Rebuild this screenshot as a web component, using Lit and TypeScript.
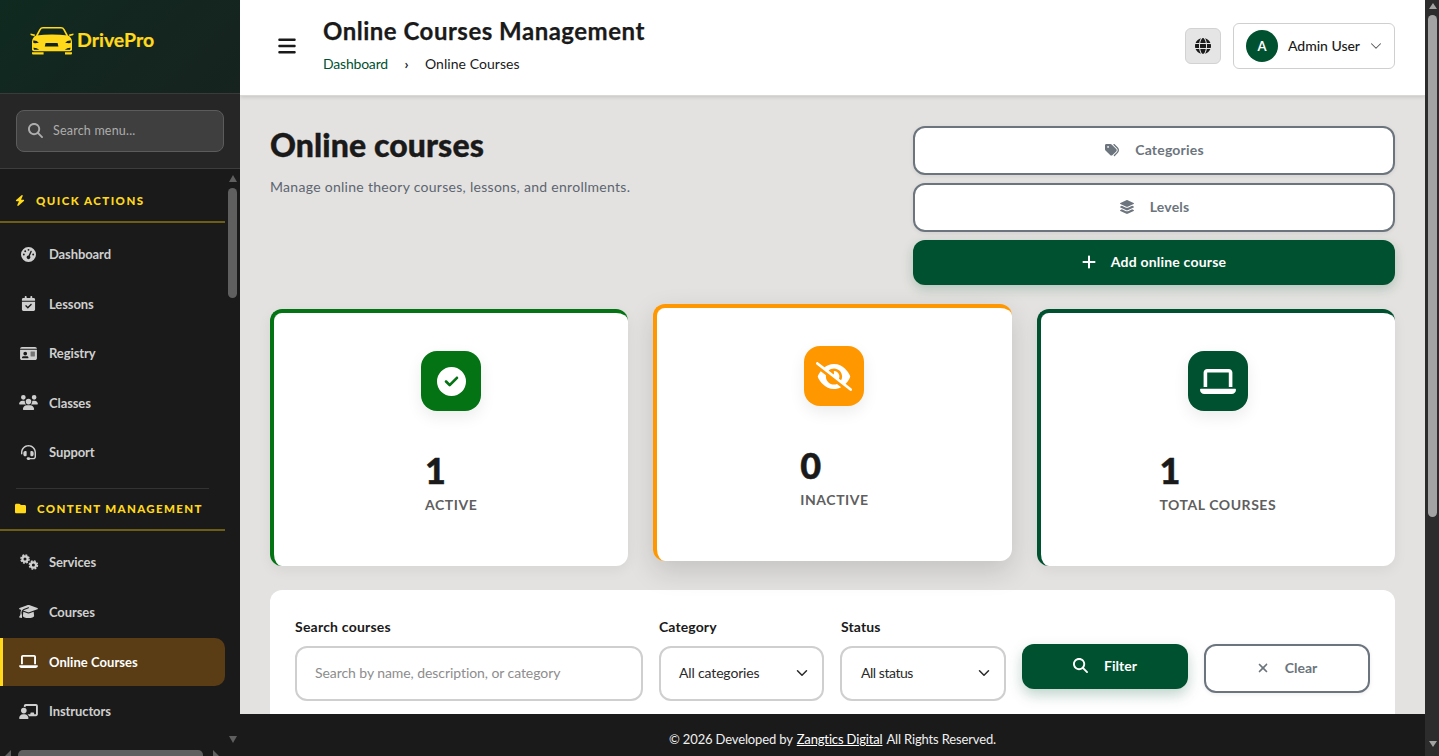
import { LitElement, html, css } from "lit";
import { customElement } from "lit/decorators.js";

const P: Record<string, [string, string]> = {
  search: ["0 0 512 512", "M416 208c0 45.9-14.9 88.3-40 122.7L502.6 457.4c12.5 12.5 12.5 32.8 0 45.3s-32.8 12.5-45.3 0L330.7 376c-34.4 25.2-76.8 40-122.7 40C93.1 416 0 322.9 0 208S93.1 0 208 0S416 93.1 416 208zM208 352a144 144 0 1 0 0-288 144 144 0 1 0 0 288z"],
  bars: ["0 0 448 512", "M0 96C0 78.3 14.3 64 32 64H416c17.7 0 32 14.3 32 32s-14.3 32-32 32H32C14.3 128 0 113.7 0 96zM0 256c0-17.7 14.3-32 32-32H416c17.7 0 32 14.3 32 32s-14.3 32-32 32H32c-17.7 0-32-14.3-32-32zM448 416c0 17.7-14.3 32-32 32H32c-17.7 0-32-14.3-32-32s14.3-32 32-32H416c17.7 0 32 14.3 32 32z"],
  bolt: ["0 0 448 512", "M349.4 44.6c5.9-13.7 1.5-29.7-10.6-38.5s-28.6-8-39.9 1.8l-256 224c-10 8.8-13.6 22.9-8.9 35.3S50.7 288 64 288H175.5L98.6 467.4c-5.9 13.7-1.5 29.7 10.6 38.5s28.6 8 39.9-1.8l256-224c10-8.8 13.6-22.9 8.9-35.3s-16.6-20.7-30-20.7H272.5L349.4 44.6z"],
  folder: ["0 0 512 512", "M64 480H448c35.3 0 64-28.7 64-64V160c0-35.3-28.7-64-64-64H288c-10.1 0-19.6-4.7-25.6-12.8L243.2 57.6C231.1 41.5 212.1 32 192 32H64C28.7 32 0 60.7 0 96V416c0 35.3 28.7 64 64 64z"],
  check: ["0 0 512 512", "M256 512A256 256 0 1 0 256 0a256 256 0 1 0 0 512zM369 209L241 337c-9.4 9.4-24.6 9.4-33.9 0l-64-64c-9.4-9.4-9.4-24.6 0-33.9s24.6-9.4 33.9 0l47 47L335 175c9.4-9.4 24.6-9.4 33.9 0s9.4 24.6 0 33.9z"],
  laptop: ["0 0 640 512", "M128 32C92.7 32 64 60.7 64 96V352h64V96H512V352h64V96c0-35.3-28.7-64-64-64H128zM19.2 384C8.6 384 0 392.6 0 403.2C0 445.6 34.4 480 76.8 480H563.2c42.4 0 76.8-34.4 76.8-76.8c0-10.6-8.6-19.2-19.2-19.2H19.2z"],
  eyeslash: ["0 0 640 512", "M38.8 5.1C28.4-3.1 13.3-1.2 5.1 9.2S-1.2 34.7 9.2 42.9l592 464c10.4 8.2 25.5 6.3 33.7-4.1s6.3-25.5-4.1-33.7L525.6 386.7c39.6-40.6 66.4-86.1 79.9-118.4c3.3-7.9 3.3-16.7 0-24.6c-14.9-35.7-46.2-87.7-93-131.1C465.5 68.8 400.8 32 320 32c-68.2 0-125 26.3-169.3 60.8L38.8 5.1zM223.1 149.5C248.6 126.2 282.7 112 320 112c79.5 0 144 64.5 144 144c0 24.9-6.3 48.3-17.4 68.7L408 294.5c8.4-19.3 10.6-41.4 4.8-63.3c-11.1-41.5-47.8-69.4-88.6-71.1c-5.8-.2-9.2 6.1-7.4 11.7c2.1 6.4 3.3 13.2 3.3 20.3c0 10.2-2.4 19.8-6.6 28.3l-90.3-70.8zM373 389.9c-16.4 6.5-34.3 10.1-53 10.1c-79.5 0-144-64.5-144-144c0-6.9 .5-13.6 1.4-20.2L83.1 161.5C60.3 191.2 44 220.8 34.5 243.7c-3.3 7.9-3.3 16.7 0 24.6c14.9 35.7 46.2 87.7 93 131.1C174.5 443.2 239.2 480 320 480c47.8 0 89.9-12.9 126.2-32.5L373 389.9z"],
  tags: ["0 0 512 512", "M345 39.1L472.8 168.4c52.4 53 52.4 138.2 0 191.2L360.8 472.9c-9.3 9.4-24.5 9.5-33.9 .2s-9.5-24.5-.2-33.9L438.6 325.9c33.9-34.3 33.9-89.4 0-123.7L310.9 72.9c-9.3-9.4-9.2-24.6 .2-33.9s24.6-9.2 33.9 .2zM0 229.5V80C0 53.5 21.5 32 48 32H197.5c17 0 33.3 6.7 45.3 18.7l168 168c25 25 25 65.5 0 90.5L277.3 442.7c-25 25-65.5 25-90.5 0l-168-168C6.7 262.7 0 246.5 0 229.5zM144 144a32 32 0 1 0 -64 0 32 32 0 1 0 64 0z"],
  layers: ["0 0 576 512", "M264.5 5.2c14.9-6.9 32.1-6.9 47 0l218.6 101c8.5 3.9 13.9 12.4 13.9 21.8s-5.4 17.9-13.9 21.8l-218.6 101c-14.9 6.9-32.1 6.9-47 0L45.9 149.8C37.4 145.8 32 137.3 32 128s5.4-17.9 13.9-21.8L264.5 5.2zM476.9 209.6l53.2 24.6c8.5 3.9 13.9 12.4 13.9 21.8s-5.4 17.9-13.9 21.8l-218.6 101c-14.9 6.9-32.1 6.9-47 0L45.9 277.8C37.4 273.8 32 265.3 32 256s5.4-17.9 13.9-21.8l53.2-24.6 152 70.2c23.4 10.8 50.4 10.8 73.8 0l152-70.2zm-152 198.2l152-70.2 53.2 24.6c8.5 3.9 13.9 12.4 13.9 21.8s-5.4 17.9-13.9 21.8l-218.6 101c-14.9 6.9-32.1 6.9-47 0L45.9 405.8C37.4 401.8 32 393.3 32 384s5.4-17.9 13.9-21.8l53.2-24.6 152 70.2c23.4 10.8 50.4 10.8 73.8 0z"],
  plus: ["0 0 448 512", "M256 80c0-17.7-14.3-32-32-32s-32 14.3-32 32V224H48c-17.7 0-32 14.3-32 32s14.3 32 32 32H192V432c0 17.7 14.3 32 32 32s32-14.3 32-32V288H400c17.7 0 32-14.3 32-32s-14.3-32-32-32H256V80z"],
  xmark: ["0 0 384 512", "M342.6 150.6c12.5-12.5 12.5-32.8 0-45.3s-32.8-12.5-45.3 0L192 210.7 86.6 105.4c-12.5-12.5-32.8-12.5-45.3 0s-12.5 32.8 0 45.3L146.7 256 41.4 361.4c-12.5 12.5-12.5 32.8 0 45.3s32.8 12.5 45.3 0L192 301.3 297.4 406.6c12.5 12.5 32.8 12.5 45.3 0s12.5-32.8 0-45.3L237.3 256 342.6 150.6z"],
  globe: ["0 0 512 512", "M352 256c0 22.2-1.2 43.6-3.3 64H163.3c-2.2-20.4-3.3-41.8-3.3-64s1.2-43.6 3.3-64H348.7c2.2 20.4 3.3 41.8 3.3 64zm28.8-64H503.9c5.3 20.5 8.1 41.9 8.1 64s-2.8 43.5-8.1 64H380.8c2.1-20.6 3.2-42 3.2-64s-1.1-43.4-3.2-64zm112.6-32H376.7c-10-63.9-29.8-117.4-55.3-151.6c78.3 20.7 142 77.5 171.9 151.6zm-149.1 0H167.7c6.1-36.4 15.5-68.6 27-94.7c10.5-23.6 22.2-40.7 33.5-51.5C239.4 3.2 248.7 0 256 0s16.6 3.2 27.8 13.8c11.3 10.8 23 27.9 33.5 51.5c11.6 26 20.9 58.2 27 94.7zm-209 0H18.6C48.6 85.9 112.2 29.1 190.6 8.4C165.1 42.6 145.3 96.1 135.3 160zM8.1 192H131.2c-2.1 20.6-3.2 42-3.2 64s1.1 43.4 3.2 64H8.1C2.8 299.5 0 278.1 0 256s2.8-43.5 8.1-64zM194.7 446.6c-11.6-26-20.9-58.2-27-94.6H344.3c-6.1 36.4-15.5 68.6-27 94.6c-10.5 23.6-22.2 40.7-33.5 51.5C272.6 508.8 263.3 512 256 512s-16.6-3.2-27.8-13.8c-11.3-10.8-23-27.9-33.5-51.5zM135.3 352c10 63.9 29.8 117.4 55.3 151.6C112.2 482.9 48.6 426.1 18.6 352H135.3zm358.1 0c-30 74.1-93.6 130.9-171.9 151.6c25.5-34.2 45.2-87.7 55.3-151.6H493.4z"],
  gauge: ["0 0 512 512", "M0 256a256 256 0 1 1 512 0A256 256 0 1 1 0 256zM288 96a32 32 0 1 0 -64 0 32 32 0 1 0 64 0zM256 416c35.3 0 64-28.7 64-64c0-17.4-6.9-33.1-18.1-44.6L366 161.7c5.3-12.1-.2-26.3-12.3-31.6s-26.3 .2-31.6 12.3L257.9 288c-.6 0-1.3 0-1.9 0c-35.3 0-64 28.7-64 64s28.7 64 64 64zM176 144a32 32 0 1 0 -64 0 32 32 0 1 0 64 0zM96 288a32 32 0 1 0 0-64 32 32 0 1 0 0 64zm352-32a32 32 0 1 0 -64 0 32 32 0 1 0 64 0z"],
  calendar: ["0 0 448 512", "M128 0c17.7 0 32 14.3 32 32V64H288V32c0-17.7 14.3-32 32-32s32 14.3 32 32V64h48c26.5 0 48 21.5 48 48v48H0V112C0 85.5 21.5 64 48 64H96V32c0-17.7 14.3-32 32-32zM0 192H448V464c0 26.5-21.5 48-48 48H48c-26.5 0-48-21.5-48-48V192zM329 305c9.4-9.4 9.4-24.6 0-33.9s-24.6-9.4-33.9 0l-95 95-47-47c-9.4-9.4-24.6-9.4-33.9 0s-9.4 24.6 0 33.9l64 64c9.4 9.4 24.6 9.4 33.9 0L329 305z"],
  idcard: ["0 0 576 512", "M0 96l576 0c0-35.3-28.7-64-64-64H64C28.7 32 0 60.7 0 96zm0 32V416c0 35.3 28.7 64 64 64H512c35.3 0 64-28.7 64-64V128H0zM64 405.3c0-29.5 23.9-53.3 53.3-53.3H234.7c29.5 0 53.3 23.9 53.3 53.3c0 5.9-4.8 10.7-10.7 10.7H74.7c-5.9 0-10.7-4.8-10.7-10.7zM176 192a64 64 0 1 1 0 128 64 64 0 1 1 0-128zm176 16c0-8.8 7.2-16 16-16H496c8.8 0 16 7.2 16 16s-7.2 16-16 16H368c-8.8 0-16-7.2-16-16zm0 64c0-8.8 7.2-16 16-16H496c8.8 0 16 7.2 16 16s-7.2 16-16 16H368c-8.8 0-16-7.2-16-16zm0 64c0-8.8 7.2-16 16-16H496c8.8 0 16 7.2 16 16s-7.2 16-16 16H368c-8.8 0-16-7.2-16-16z"],
  users: ["0 0 640 512", "M144 0a80 80 0 1 1 0 160A80 80 0 1 1 144 0zM512 0a80 80 0 1 1 0 160A80 80 0 1 1 512 0zM0 298.7C0 239.8 47.8 192 106.7 192h42.7c15.9 0 31 3.5 44.6 9.7c-1.3 7.2-1.9 14.7-1.9 22.3c0 38.2 16.8 72.5 43.3 96c-.2 0-.4 0-.7 0H21.3C9.6 320 0 310.4 0 298.7zM405.3 320c-.2 0-.4 0-.7 0c26.6-23.5 43.3-57.8 43.3-96c0-7.6-.7-15-1.9-22.3c13.6-6.3 28.7-9.7 44.6-9.7h42.7C592.2 192 640 239.8 640 298.7c0 11.8-9.6 21.3-21.3 21.3H405.3zM224 224a96 96 0 1 1 192 0 96 96 0 1 1 -192 0zM128 485.3C128 411.7 187.7 352 261.3 352H378.7C452.3 352 512 411.7 512 485.3c0 14.7-11.9 26.7-26.7 26.7H154.7c-14.7 0-26.7-11.9-26.7-26.7z"],
  headset: ["0 0 512 512", "M256 48C141.1 48 48 141.1 48 256v40c0 13.3-10.7 24-24 24s-24-10.7-24-24V256C0 114.6 114.6 0 256 0S512 114.6 512 256V400.1c0 48.6-39.4 88-88.1 88L313.6 488c-8.3 14.3-23.8 24-41.6 24H240c-26.5 0-48-21.5-48-48s21.5-48 48-48h32c17.8 0 33.3 9.7 41.6 24l110.4 .1c22.1 0 40-17.9 40-40V256c0-114.9-93.1-208-208-208zM144 208h16c17.7 0 32 14.3 32 32V352c0 17.7-14.3 32-32 32H144c-35.3 0-64-28.7-64-64V272c0-35.3 28.7-64 64-64zm224 0c35.3 0 64 28.7 64 64v48c0 35.3-28.7 64-64 64H352c-17.7 0-32-14.3-32-32V240c0-17.7 14.3-32 32-32h16z"],
  cap: ["0 0 640 512", "M320 32c-8.1 0-16.1 1.4-23.7 4.1L15.8 137.4C6.3 140.9 0 149.9 0 160s6.3 19.1 15.8 22.6l57.9 20.9C57.3 229.3 48 259.8 48 291.9v28.1c0 28.4-10.8 57.7-22.3 80.8c-6.5 13-13.9 25.8-22.5 37.6C0 442.7-.9 448.3 .9 453.4s6 8.9 11.2 10.2l64 16c4.2 1.1 8.7 .3 12.4-2s6.3-6.1 7.1-10.4c8.6-42.8 4.3-81.2-2.1-108.7C90.3 344.3 86 329.8 80 316.5V291.9c0-30.2 10.2-58.7 27.9-81.5c12.9-15.5 29.6-28 49.2-35.7l157-61.7c8.2-3.2 17.5 .8 20.7 9s-.8 17.5-9 20.7l-157 61.7c-12.4 4.9-23.3 12.4-32.2 21.6l159.6 57.6c7.6 2.7 15.6 4.1 23.7 4.1s16.1-1.4 23.7-4.1L624.2 182.6c9.5-3.4 15.8-12.5 15.8-22.6s-6.3-19.1-15.8-22.6L343.7 36.1C336.1 33.4 328.1 32 320 32zM128 408c0 35.3 86 72 192 72s192-36.7 192-72L496.7 262.6 354.5 314c-11.1 4-22.8 6-34.5 6s-23.5-2-34.5-6L143.3 262.6 128 408z"],
  board: ["0 0 640 512", "M160 64c0-35.3 28.7-64 64-64H576c35.3 0 64 28.7 64 64V352c0 35.3-28.7 64-64 64H336.8c-11.8-25.5-29.9-47.5-52.4-64H384V320c0-17.7 14.3-32 32-32h64c17.7 0 32 14.3 32 32v32h64V64L224 64v49.1C205.2 102.2 183.3 96 160 96V64zm0 64a96 96 0 1 1 0 192 96 96 0 1 1 0-192zM133.3 352h53.3C260.3 352 320 411.7 320 485.3c0 14.7-11.9 26.7-26.7 26.7H26.7C11.9 512 0 500.1 0 485.3C0 411.7 59.7 352 133.3 352z"],
};

function ic(name: string, w: number, h: number) {
  const [vb, d] = P[name];
  return html`<svg class="ic" viewBox=${vb} width=${w} height=${h} fill="currentColor" aria-hidden="true"><path d=${d}></path></svg>`;
}

const gears = html`<svg class="ic" viewBox="0 0 20 16" width="20" height="16" fill="none" stroke="currentColor" aria-hidden="true">
  <circle cx="6" cy="5" r="2.6" stroke-width="2.2"></circle>
  <circle cx="6" cy="5" r="4.1" stroke-width="1.4" stroke-dasharray="1.9 1.32"></circle>
  <circle cx="14.4" cy="11" r="2.6" stroke-width="2.2"></circle>
  <circle cx="14.4" cy="11" r="4.1" stroke-width="1.4" stroke-dasharray="1.9 1.32"></circle>
</svg>`;

const car = html`<svg class="car" viewBox="30 26 44 30" width="44" height="30" aria-hidden="true">
  <path fill="none" stroke="#ffd91a" stroke-width="1.6" stroke-linejoin="round" d="M36.6 36 40 29.6Q41 27.8 43 27.8H61Q63 27.8 64 29.6L67.4 36"></path>
  <path fill="#ffd91a" d="M30.6 33.4 35 34.6 34.6 36.3 31 35.2Q30 34.4 30.6 33.4ZM73.4 33.4 69 34.6 69.4 36.3 73 35.2Q74 34.4 73.4 33.4Z"></path>
  <path fill="#ffd91a" d="M36 35.6Q52 33.6 68 35.6 71.6 37.4 72 41.5V49.5Q72 51.2 70 51.2H34Q32 51.2 32 49.5V41.5Q32.4 37.4 36 35.6Z"></path>
  <path fill="#ffd91a" d="M32 52.2H43.6V54.6H33Q32 54.6 32 53.6ZM65 52.2H72V53.6Q72 54.6 71 54.6H65Z"></path>
  <path fill="#13241f" d="M33.2 40.6Q36.6 40.2 38.8 42.8 35.6 43.4 33.4 43ZM70.8 40.6Q67.4 40.2 65.2 42.8 68.4 43.4 70.6 43ZM45.6 43H57.6L58.4 46.4H44.8ZM33.4 47.8Q36.6 47.6 39.2 49.8H34ZM70.6 47.8Q67.4 47.6 64.8 49.8H70Z"></path>
</svg>`;

const chevron = html`<svg class="ic" viewBox="0 0 16 16" width="12" height="12" fill="none" stroke="currentColor" stroke-width="2" stroke-linecap="round" stroke-linejoin="round" aria-hidden="true"><path d="m2 5 6 6 6-6"></path></svg>`;
const chevronThin = html`<svg class="ic" viewBox="0 0 16 16" width="12" height="12" fill="none" stroke="currentColor" stroke-width="1.4" stroke-linecap="round" stroke-linejoin="round" aria-hidden="true"><path d="m2 5 6 6 6-6"></path></svg>`;

const tri = (dir: string) => html`<span class="tri ${dir}"></span>`;

type Item = { label: string; icon?: string; active?: boolean };

const QUICK: Item[] = [
  { label: "Dashboard", icon: "gauge" },
  { label: "Lessons", icon: "calendar" },
  { label: "Registry", icon: "idcard" },
  { label: "Classes", icon: "users" },
  { label: "Support", icon: "headset" },
];
const CONTENT: Item[] = [
  { label: "Services" },
  { label: "Courses", icon: "cap" },
  { label: "Online Courses", icon: "laptop", active: true },
  { label: "Instructors", icon: "board" },
];

@customElement("app-root")
export class AppRoot extends LitElement {
  static styles = css`
    :host {
      display: grid;
      grid-template-columns: 240px 1fr 14px;
      height: 100vh;
      overflow: hidden;
      font-family: "Lato", "Liberation Sans", sans-serif;
      color: #1a1a1a;
      background: #e3e2e0;
    }
    * { box-sizing: border-box; }
    .ic { display: block; flex: none; }

    /* sidebar */
    .side { background: #1a1a1a; display: flex; flex-direction: column; height: 756px; overflow: hidden; }
    .brand { height: 94px; flex: none; padding: 27px 0 0 30px; display: flex; align-items: flex-start; gap: 3px; background: linear-gradient(135deg, #0f2a20, #14251f 60%, #16231f); border-bottom: 1px solid #3a3a3a; }
    .car { display: block; flex: none; margin-top: -1px; }
    .brand-name { font-size: 19.5px; font-weight: 700; color: #ffd91a; line-height: 28px; margin-top: -1px; -webkit-text-stroke: .2px #ffd91a; }
    .side-search { height: 75px; flex: none; padding: 16px 16px 0; background: #262626; border-bottom: 1px solid #3d3d3d; }
    .search-box { height: 42px; border: 1px solid #5c5c5c; border-radius: 8px; background: #3f3f3f; display: flex; align-items: center; gap: 10px; padding: 0 11px 2px; color: #adadad; font-size: 12.5px; letter-spacing: .2px; }
    .nav-wrap { flex: 1; display: flex; min-height: 0; }
    .nav { width: 225px; flex: none; overflow: hidden; }
    .section { height: 54px; padding: 10px 0 0 15px; display: flex; align-items: center; gap: 11px; border-bottom: 2px solid #6e5d17; color: #ffd91a; font-size: 11.5px; font-weight: 900; letter-spacing: 1.45px; text-transform: uppercase; }
    .section.two { height: 42px; padding: 0 0 0 15px; gap: 11px; letter-spacing: 1.35px; }
    .items { display: flex; flex-direction: column; padding-top: 6.5px; }
    .items.second { padding-top: 7px; }
    .item { height: 49.5px; flex: none; display: flex; align-items: center; gap: 11px; padding-left: 19px; color: #cfcfcf; font-size: 13px; font-weight: 700; letter-spacing: -.1px; }
    .item.active { height: 48px; margin: 1px 0; color: #fff; background: #5a3d15; border-left: 3px solid #ffd91a; padding-left: 16px; border-radius: 0 10px 10px 0; letter-spacing: .05px; }
    .iconbox { width: 19px; display: flex; justify-content: center; flex: none; }
    .rule { height: 1px; background: #333; margin: 10.5px 16px 0; width: 193px; }
    .vbar { width: 15px; flex: none; display: flex; flex-direction: column; align-items: center; padding-top: 5px; }
    .thumb { width: 9px; height: 110px; margin-top: 6px; border-radius: 5px; background: #5f5f5f; }
    .tri { display: block; width: 0; height: 0; border-style: solid; border-color: transparent; }
    .tri.up { border-width: 0 4.5px 7px; border-bottom-color: #5f5f5f; margin-top: 1px; }
    .tri.down { border-width: 7px 4.5px 0; border-top-color: #5f5f5f; margin-top: auto; margin-bottom: 7px; }
    .hbar { height: 6px; flex: none; display: flex; gap: 7px; align-items: flex-start; padding: 0 0 0 4px; overflow: hidden; }
    .hbar .tri.left { border-width: 7px 7px 7px 0; border-right-color: #5f5f5f; }
    .hbar .tri.right { border-width: 7px 0 7px 7px; border-left-color: #5f5f5f; margin-left: 3px; }
    .hthumb { width: 185px; height: 10px; background: #5f5f5f; border-radius: 5px; }

    /* main */
    .main { display: flex; flex-direction: column; min-width: 0; height: 756px; overflow: hidden; }
    .top { height: 96px; flex: none; background: #fff; display: flex; align-items: center; padding: 0 30px 3px 38px; box-shadow: 0 1px 4px rgba(0,0,0,.14); border-bottom: 1px solid #d9d8d6; position: relative; z-index: 2; }
    .titles { margin-left: 27px; flex: 1; align-self: flex-start; padding-top: 15px; }
    .titles h1 { margin: 0; font-size: 24px; font-weight: 700; line-height: 32px; letter-spacing: .5px; -webkit-text-stroke: .25px #1a1a1a; }
    .crumb { display: flex; margin-top: 7px; font-size: 14px; line-height: 20px; letter-spacing: .05px; }
    .crumb a { color: #00512f; width: 65px; letter-spacing: -.2px; }
    .crumb i { font-style: normal; width: 37px; text-align: center; font-weight: 700; }
    .lang { width: 36px; height: 36px; border: 1px solid #d2d2d2; background: #e5e5e5; border-radius: 6px; display: flex; align-items: center; justify-content: center; margin-right: 12px; color: #1a1a1a; }
    .user { width: 162px; height: 46px; border: 1px solid #cfcfcf; border-radius: 6px; display: flex; align-items: center; padding: 0 13px 2px 12px; gap: 10px; font-size: 14px; font-weight: 500; letter-spacing: -.03px; white-space: nowrap; }
    .avatar { width: 32px; height: 32px; border-radius: 50%; background: #00512f; color: #fff; display: flex; align-items: center; justify-content: center; font-size: 13px; font-weight: 700; flex: none; margin-top: 2px; }
    .user .ic { margin-left: auto; color: #555; margin-top: 2px; }

    .content { flex: 1; min-height: 0; overflow: hidden; padding: 30px 30px 0; }
    .head { display: flex; justify-content: space-between; align-items: flex-start; }
    .head h2 { margin: -1px 0 0; font-size: 32px; line-height: 40px; font-weight: 900; letter-spacing: .1px; -webkit-text-stroke: .4px #1a1a1a; }
    .head p { margin: 12px 0 0; font-size: 14px; line-height: 20px; color: #5d6570; letter-spacing: .29px; }
    .acts { width: 482px; display: flex; flex-direction: column; gap: 8px; }
    .btn { display: flex; align-items: center; justify-content: center; gap: 15px; border-radius: 12px; font-size: 14px; font-weight: 700; padding-bottom: 2px; letter-spacing: .2px; }
    .btn.out { height: 49px; background: #fff; border: 2px solid #6c757d; color: #6c757d; box-shadow: 0 1px 4px rgba(0,0,0,.08); }
    .btn.fill { height: 45px; background: #00512f; color: #fff; box-shadow: 0 4px 12px rgba(0,81,47,.22); }

    .stats { display: grid; grid-template-columns: repeat(3, 1fr); gap: 25px; margin-top: 24px; }
    .stat { height: 257px; background: #fff; border-radius: 12px; border-top: 4px solid var(--c); border-left: 4px solid var(--c); padding: 38px 0 0; display: flex; flex-direction: column; align-items: center; box-shadow: 0 4px 14px rgba(0,0,0,.06); }
    .stat.lift { transform: translateY(-5px); box-shadow: 0 10px 28px rgba(0,0,0,.14); }
    .badge { width: 60px; height: 60px; border-radius: 16px; background: var(--c); color: #fff; display: flex; align-items: center; justify-content: center; box-shadow: 0 6px 16px rgba(0,0,0,.08); }
    .txt { margin-top: 35px; display: inline-flex; flex-direction: column; }
    .num { font-size: 36px; line-height: 48px; font-weight: 900; color: #1a1a1a; -webkit-text-stroke: .5px #1a1a1a; }
    .lab { font-size: 14px; line-height: 20px; margin-top: 1px; font-weight: 700; color: #5f5f5f; letter-spacing: .55px; text-transform: uppercase; }

    .filters { margin-top: 24px; height: 200px; background: #fff; border-radius: 12px; padding: 25px; display: flex; gap: 16px; align-items: flex-start; }
    .field { display: flex; flex-direction: column; }
    .field label { font-size: 14px; line-height: 24px; font-weight: 700; margin-bottom: 7px; letter-spacing: .1px; }
    .f-search label { letter-spacing: .22px; }
    .control { height: 55px; border: 2px solid #cfcfcf; border-radius: 12px; display: flex; align-items: center; padding: 0 14px 2px 18px; font-size: 14px; color: #2a2a2a; letter-spacing: -.15px; }
    .control .ph { color: #8d8d8d; letter-spacing: -.07px; }
    .control .ic { margin-left: auto; }
    .f-search { width: 348px; }
    .f-cat { width: 165px; }
    .f-stat { width: 166px; margin-left: 0; }
    .f-stat label { padding-left: 1px; }
    .f-stat .control { padding-left: 19px; letter-spacing: -.45px; }
    .f-btn { width: 166px; margin-top: 29px; gap: 16px; letter-spacing: 0; }
    .f-btn.fill { box-shadow: 0 6px 14px rgba(0,81,47,.25); }

    .foot { height: 42px; flex: none; background: #1a1a1a; color: #f0f0f0; display: flex; align-items: flex-start; padding-top: 16px; justify-content: center; font-size: 13px; line-height: 18px; letter-spacing: -.15px; position: relative; z-index: 2; }
    .foot a { color: #fff; text-decoration: underline; padding: 0 4px; }

    /* page scrollbar */
    .pagebar { background: #2c2c2c; display: flex; flex-direction: column; align-items: center; padding: 3px 0 0 1px; height: 756px; }
    .pagebar .tri.up { border-width: 0 4.5px 6px; border-bottom-color: #a3a3a3; margin-top: 0; }
    .pagebar .thumb { width: 9px; height: 502px; margin-top: 6px; border-radius: 5px; background: #a3a3a3; }
    .pagebar .tri.down { border-width: 6px 4.5px 0; border-top-color: #a3a3a3; margin-bottom: 9px; }
  `;

  private item(i: Item) {
    return html`<div class="item ${i.active ? "active" : ""}">
      <span class="iconbox">${i.icon ? ic(i.icon, 19, 15) : gears}</span>
      <span>${i.label}</span>
    </div>`;
  }

  private stat(color: string, icon: unknown, num: string, label: string, lift = false) {
    return html`<div class="stat ${lift ? "lift" : ""}" style="--c:${color}">
      <div class="badge">${icon}</div>
      <div class="txt"><div class="num">${num}</div><div class="lab">${label}</div></div>
    </div>`;
  }

  render() {
    return html`
      <aside class="side">
        <div class="brand">${car}<span class="brand-name">DrivePro</span></div>
        <div class="side-search">
          <div class="search-box">${ic("search", 15, 15)}<span>Search menu...</span></div>
        </div>
        <div class="nav-wrap">
          <nav class="nav">
            <div class="section">${ic("bolt", 10, 11)}<span>Quick actions</span></div>
            <div class="items">${QUICK.map((i) => this.item(i))}</div>
            <div class="rule"></div>
            <div class="section two">${ic("folder", 11, 11)}<span>Content management</span></div>
            <div class="items second">${CONTENT.map((i) => this.item(i))}</div>
          </nav>
          <div class="vbar">${tri("up")}<div class="thumb"></div>${tri("down")}</div>
        </div>
        <div class="hbar">${tri("left")}<div class="hthumb"></div>${tri("right")}</div>
      </aside>

      <div class="main">
        <header class="top">
          <div class="burger">${ic("bars", 18, 20)}</div>
          <div class="titles">
            <h1>Online Courses Management</h1>
            <div class="crumb"><a>Dashboard</a><i>›</i><span>Online Courses</span></div>
          </div>
          <div class="lang">${ic("globe", 16, 16)}</div>
          <div class="user"><span class="avatar">A</span><span>Admin User</span>${chevronThin}</div>
        </header>

        <main class="content">
          <section class="head">
            <div>
              <h2>Online courses</h2>
              <p>Manage online theory courses, lessons, and enrollments.</p>
            </div>
            <div class="acts">
              <div class="btn out">${ic("tags", 16, 14)}<span>Categories</span></div>
              <div class="btn out">${ic("layers", 16, 14)}<span>Levels</span></div>
              <div class="btn fill">${ic("plus", 14, 16)}<span>Add online course</span></div>
            </div>
          </section>

          <section class="stats">
            ${this.stat("#047314", ic("check", 29, 29), "1", "Active")}
            ${this.stat("#ff9800", ic("eyeslash", 36, 29), "0", "Inactive", true)}
            ${this.stat("#00512f", ic("laptop", 36, 29), "1", "Total courses")}
          </section>

          <section class="filters">
            <div class="field f-search"><label>Search courses</label><div class="control"><span class="ph">Search by name, description, or category</span></div></div>
            <div class="field f-cat"><label>Category</label><div class="control"><span>All categories</span>${chevron}</div></div>
            <div class="field f-stat"><label>Status</label><div class="control"><span>All status</span>${chevron}</div></div>
            <div class="btn fill f-btn">${ic("search", 15, 15)}<span>Filter</span></div>
            <div class="btn out f-btn">${ic("xmark", 12, 14)}<span>Clear</span></div>
          </section>
        </main>

        <footer class="foot">© 2026 Developed by <a>Zangtics Digital</a> All Rights Reserved.</footer>
      </div>

      <div class="pagebar">${tri("up")}<div class="thumb"></div>${tri("down")}</div>
    `;
  }
}
